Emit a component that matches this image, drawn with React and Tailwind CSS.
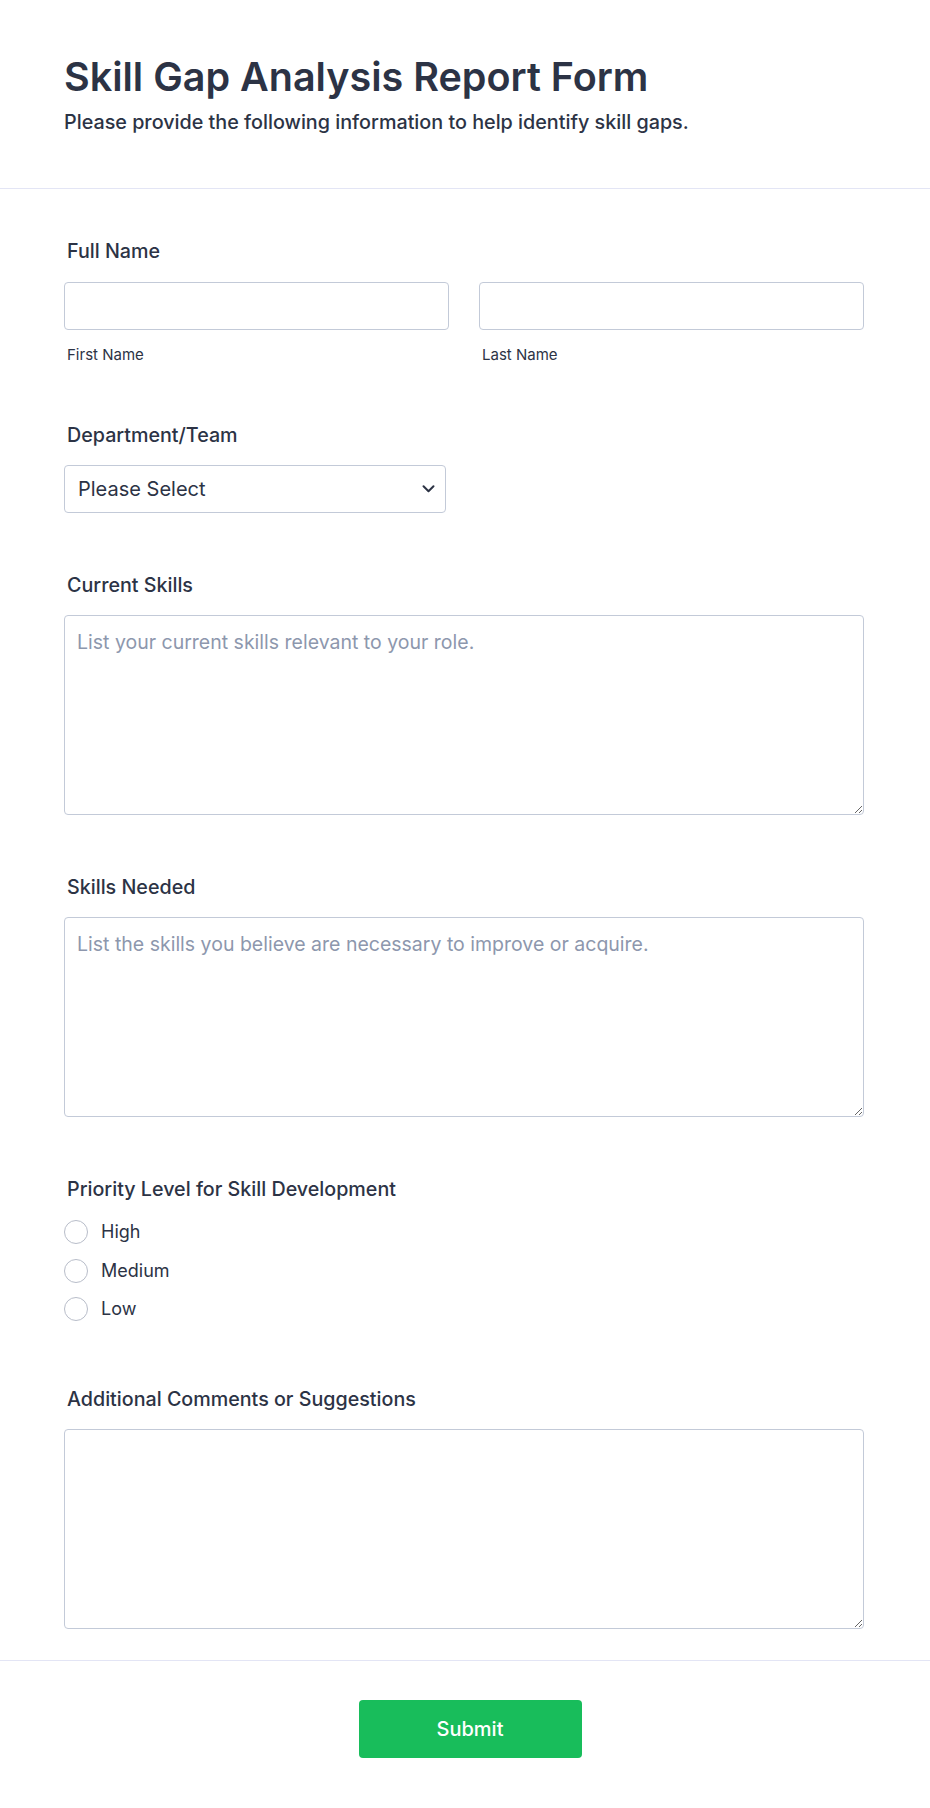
import React, { useState } from "react";

function Label({ children }) {
  return (
    <label className="block px-[3px] text-[19.7px] leading-[24px] font-medium text-[#2c3345]">
      {children}
    </label>
  );
}

function Area({ placeholder }) {
  return (
    <textarea
      placeholder={placeholder}
      className="mt-[18px] block w-full h-[200px] rounded-[4px] border border-[#c3cad8] bg-white px-[12px] py-[12px] text-[19.5px] leading-[28px] text-[#2c3345] placeholder:text-[#8d97ad] outline-none"
    />
  );
}

export default function App() {
  const [priority, setPriority] = useState(null);

  return (
    <div className="min-h-screen bg-white text-[#2c3345]" style={{ fontFamily: "Inter, 'Noto Sans', sans-serif" }}>
      <div className="px-16 pt-[53px] pb-[52px] border-b border-[#e3e5f5]">
        <h1 className="text-[39.5px] leading-[48px] font-semibold">Skill Gap Analysis Report Form</h1>
        <p className="mt-[7px] text-[19.75px] leading-[28px] font-medium">
          Please provide the following information to help identify skill gaps.
        </p>
      </div>

      <div className="pl-16 pr-[66px] pt-[50px] pb-[31px] border-b border-[#e3e5f5]">
        {/* full name */}
        <Label>Full Name</Label>
        <div className="mt-[19px] grid grid-cols-2 gap-[30px]">
          <div>
            <input className="block w-full h-[48px] rounded-[4px] border border-[#c3cad8] px-3 outline-none" />
            <div className="mt-4 px-[3px] text-[15px] leading-[18px] text-[#2c3345]">First Name</div>
          </div>
          <div>
            <input className="block w-full h-[48px] rounded-[4px] border border-[#c3cad8] px-3 outline-none" />
            <div className="mt-4 px-[3px] text-[15px] leading-[18px] text-[#2c3345]">Last Name</div>
          </div>
        </div>

        {/* department */}
        <div className="mt-[59px]">
          <Label>Department/Team</Label>
          <div className="mt-[18px] relative w-[382px]">
            <select className="block w-full h-[48px] appearance-none rounded-[4px] border border-[#c3cad8] bg-white pl-[13px] pr-10 text-[20px] text-[#2c3345] outline-none">
              <option>Please Select</option>
              <option>Engineering</option>
              <option>Marketing</option>
              <option>Sales</option>
              <option>Operations</option>
            </select>
            <svg
              className="pointer-events-none absolute right-[11px] top-1/2 -translate-y-1/2"
              width="13"
              height="9"
              viewBox="0 0 13 9"
              fill="none"
            >
              <path d="M1.5 1.75L6.5 6.75L11.5 1.75" stroke="#2c3345" strokeWidth="2" strokeLinecap="round" strokeLinejoin="round" />
            </svg>
          </div>
        </div>

        {/* current skills */}
        <div className="mt-[60px]">
          <Label>Current Skills</Label>
          <Area placeholder="List your current skills relevant to your role." />
        </div>

        {/* skills needed */}
        <div className="mt-[60px]">
          <Label>Skills Needed</Label>
          <Area placeholder="List the skills you believe are necessary to improve or acquire." />
        </div>

        {/* priority */}
        <div className="mt-[60px]">
          <Label>Priority Level for Skill Development</Label>
          <div className="mt-[19px] flex flex-col gap-[14.5px]">
            {["High", "Medium", "Low"].map((p) => (
              <label key={p} className="flex items-center gap-[13px] cursor-pointer" onClick={() => setPriority(p)}>
                <span className="flex w-[24px] h-[24px] items-center justify-center rounded-full border border-[#b8bdc9] bg-white">
                  {priority === p && <span className="w-[12px] h-[12px] rounded-full bg-[#2e69ff]" />}
                </span>
                <span className="text-[18px] leading-[24px]">{p}</span>
              </label>
            ))}
          </div>
        </div>

        {/* comments */}
        <div className="mt-[66px]">
          <Label>Additional Comments or Suggestions</Label>
          <Area placeholder="" />
        </div>
      </div>

      <div className="flex justify-center pt-[39px] pb-[51px] pl-[10px]">
        <button className="w-[223px] h-[58px] rounded-[4px] bg-[#18bd5b] text-white text-[20px] font-medium">
          Submit
        </button>
      </div>
    </div>
  );
}
